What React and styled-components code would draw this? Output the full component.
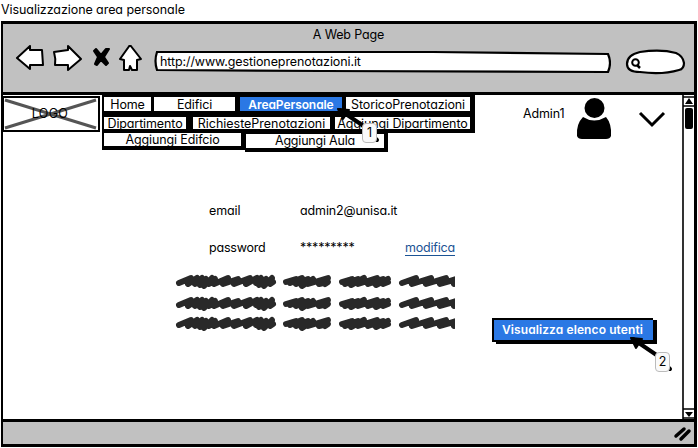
import React from "react";
import styled, { createGlobalStyle } from "styled-components";

const Global = createGlobalStyle`
  * { box-sizing: border-box; }
  html, body { margin: 0; background: #fff; overflow: hidden; }
  body {
    font-family: Inter, "Liberation Sans", sans-serif;
    font-feature-settings: "cv11", "ss03";
    font-size: 12.5px;
    line-height: 16px;
    color: #000;
  }
  svg { display: block; flex: none; }
`;

const Text = styled.span`
  position: relative;
  white-space: nowrap;
  font-size: ${(p) => p.$size || 12.5}px;
  letter-spacing: ${(p) => p.$ls ?? -0.12}px;
  font-weight: ${(p) => p.$weight || 400};
`;

const Page = styled.div`
  width: 698px;
  height: 448px;
  display: flex;
  flex-direction: column;
`;
const Caption = styled.header`
  height: 21px;
  padding: 2px 0 0 1px;
`;
const Browser = styled.main`
  width: 696px;
  height: 426px;
  margin-left: 1px;
  border: 3px solid #000;
  border-left-width: 2px;
  display: flex;
  flex-direction: column;
`;
const Chrome = styled.div`
  height: 71px;
  background: #c1c1c1;
  border-bottom: 3px solid #000;
  flex: none;
`;
const WindowTitle = styled.div`
  height: 21px;
  padding-top: 3px;
  text-align: center;
`;
const Toolbar = styled.div`
  display: flex;
  height: 45px;
`;
const NavIcons = styled.div`
  width: 150px;
  flex: none;
`;
const Address = styled.div`
  position: relative;
  width: 458px;
  height: 24px;
  margin-top: 5px;
  flex: none;
  svg { position: absolute; inset: 0; }
`;
const Url = styled.div`
  position: relative;
  padding: 4px 0 0 7px;
`;
const Search = styled.div`
  margin: 3px 0 0 13px;
`;
const Body = styled.div`
  height: 324px;
  display: flex;
  flex: none;
`;
const Content = styled.section`
  width: 679px;
  display: flex;
  flex-direction: column;
`;
const Top = styled.div`
  display: flex;
  height: 88px;
  align-items: flex-start;
`;
const Logo = styled.div`
  position: relative;
  width: 98px;
  height: 38px;
  flex: none;
  display: flex;
  justify-content: center;
  padding: 11px 4px 0 0;
  svg { position: absolute; left: 0; top: 0; }
`;
const Menu = styled.nav`
  width: 373px;
  margin-left: 1px;
  flex: none;
`;
const MenuRow = styled.div`
  display: flex;
  align-items: flex-start;
  height: ${(p) => p.$h}px;
`;
const MenuItem = styled.div`
  width: ${(p) => p.$w}px;
  height: ${(p) => p.$h}px;
  flex: none;
  border: solid #000;
  border-width: ${(p) => p.$b};
  background: ${(p) => (p.$active ? "#2b78e4" : "#fff")};
  color: ${(p) => (p.$active ? "#fff" : "#000")};
  display: flex;
  justify-content: center;
  line-height: ${(p) => p.$lh || 15}px;
`;
const User = styled.div`
  display: flex;
  margin-left: 48px;
  padding-top: 3px;
`;
const UserName = styled.div`
  width: 53px;
  padding-top: 8px;
`;
const Chevron = styled.div`
  margin: 13px 0 0 26px;
`;
const Details = styled.dl`
  margin: 20px 0 0 206px;
  height: 69px;
  display: grid;
  grid-template-columns: 91px 105px 60px;
  grid-auto-rows: 37px;
`;
const Link = styled.a`
  color: #1b5394;
  border-bottom: 1px solid #1b5394;
  width: 50px;
  height: 16px;
  white-space: nowrap;
`;
const Lower = styled.div`
  display: flex;
`;
const ScribbleArea = styled.div`
  width: 314px;
  padding: 0 0 0 172px;
  flex: none;
`;
const Action = styled.button`
  font: inherit;
  width: 165px;
  height: 26px;
  margin: 46px 0 0 175px;
  padding: 0 2px 2px 0;
  color: #fff;
  background: #2b78e4;
  border: solid #000;
  border-width: 2px 4px 4px 2px;
  line-height: 17px;
  clip-path: polygon(0 0, 161px 0, 161px 2px, 100% 2px, 100% 100%, 4px 100%, 4px 24px, 0 24px);
`;
const ScrollBar = styled.div`
  width: 12px;
  display: flex;
  flex-direction: column;
`;
const Footer = styled.footer`
  height: 25px;
  background: #c1c1c1;
  border-top: 3px solid #000;
  display: flex;
  justify-content: flex-end;
`;
const Callout = styled.div`
  position: absolute;
  left: ${(p) => p.$x}px;
  top: ${(p) => p.$y}px;
  width: 46px;
  height: 38px;
`;
const CalloutNumber = styled.div`
  position: absolute;
  left: 26px;
  top: 16px;
  width: 15px;
  height: 20px;
  border: 1px solid #bbb;
  border-radius: 4px;
  background: #fafafa;
  text-align: center;
  line-height: 18px;
`;

function Marker({ x, y, n }) {
  return (
    <Callout $x={x} $y={y}>
      <svg width="46" height="38">
        <path d="M4 3 29 20M40 32 41 33" fill="none" stroke="#000" strokeWidth="4" strokeLinecap="round" />
        <path d="M2 2 13 3 11 6 7 12Z" stroke="#000" strokeWidth="2" strokeLinejoin="round" />
      </svg>
      <CalloutNumber>{n}</CalloutNumber>
    </Callout>
  );
}

const scribbles = [
  "M4 11 16 6 13 12 22 6 20 12 27 6 25 13 31 7 29 14 37 6 34 12 40 7 39 12 53 6 48 12 63 7 59 12 75 6 71 12 82 6 81 11 86 6 84 13 91 7 89 14 97 6 95 12 98 10",
  "M111 10 121 7 115 11 127 6 121 12 133 7 127 14 138 7 133 12 153 6 144 12 153 10 150 12",
  "M167 10 177 7 170 12 183 7 176 13 189 6 183 12 202 6 193 12 208 7 201 13 213 7 208 12 213 10",
  "M227 11 241 6 237 12 256 6 251 12 271 6 265 12 285 6 279 12 288 7",
];

function Scribble({ height }) {
  return (
    <svg width="280" height={height}>
      {scribbles.map((d, i) => (
        <path key={i} d={d} fill="none" stroke="#292929" strokeWidth="6" strokeLinecap="round" strokeLinejoin="round" />
      ))}
    </svg>
  );
}

export default function App() {
  return (
    <Page>
      <Global />
      <Caption><Text $ls={-0.07}>Visualizzazione area personale</Text></Caption>
      <Browser>
        <Chrome>
          <WindowTitle><Text $ls={-0.15}>A Web Page</Text></WindowTitle>
          <Toolbar>
            <NavIcons>
              <svg width="150" height="45" fill="#fff" stroke="#000" strokeWidth="2" strokeLinejoin="round">
                <path d="M14 13 27 1 27 5 39 5 40 20 27 20 27 24Z" />
                <path d="M51 7 65 5 65 1 78 14 65 25 65 20 52 20Q53 14 51 7Z" />
                <path d="M127 0 117 14 121 15 121 25 126 25 127 21 129 25 134 25 134 15 138 14Z" />
                <path d="M93 4 98 10 103 4 106 4 101 12 105 18 103 20 98 15 94 20 92 19 95 12 91 6Z" fill="#000" strokeWidth="2" />
              </svg>
            </NavIcons>
            <Address>
              <svg width="458" height="24">
                <path d="M4 2 170 2 280 2 455 4Q459 13 455 22L170 21 4 20Q1 11 4 2Z" fill="#fff" stroke="#000" strokeWidth="2.2" />
              </svg>
              <Url><Text $ls={-0.1}>http://www.gestioneprenotazioni.it</Text></Url>
            </Address>
            <Search>
              <svg width="64" height="27">
                <path d="M3 16Q3 7 16 4 37 1 52 5 59 8 60 15 60 21 55 22 38 27 16 24 3 24 3 16Z" fill="#fff" stroke="#000" strokeWidth="2.2" />
                <circle cx="11.5" cy="14.5" r="3.3" fill="none" stroke="#000" strokeWidth="2" />
                <path d="M13 17 16 20" stroke="#000" strokeWidth="2.5" />
              </svg>
            </Search>
          </Toolbar>
        </Chrome>
        <Body>
          <Content>
            <Top>
              <Logo>
                <svg width="98" height="38">
                  <path d="M0 2H96V36H0Z" fill="#fff" stroke="#000" strokeWidth="2" />
                  <path d="M2 5 93 33M2 33 93 5" stroke="#555" strokeWidth="3" />
                </svg>
                <Text $ls={0.3}>LOGO</Text>
              </Logo>
              <Menu>
                <MenuRow $h={20}>
                  <MenuItem $w={51} $h={20} $b="2px 2px 4px 2px"><Text>Home</Text></MenuItem>
                  <MenuItem $w={87} $h={20} $b="2px 5px 4px 1px"><Text>Edifici</Text></MenuItem>
                  <MenuItem $w={106} $h={20} $b="2px 4px 4px 0" $active><Text $weight={600} $size={12} $ls={-0.08}>AreaPersonale</Text></MenuItem>
                  <MenuItem $w={129} $h={20} $b="2px 5px 4px 0"><Text>StoricoPrenotazioni</Text></MenuItem>
                </MenuRow>
                <MenuRow $h={18}>
                  <MenuItem $w={88} $h={18} $b="2px 4px 4px 2px" $lh={13}><Text>Dipartimento</Text></MenuItem>
                  <MenuItem $w={144} $h={18} $b="2px 4px 4px 3px" $lh={14}><Text $ls={-0.02}>RichiestePrenotazioni</Text></MenuItem>
                  <MenuItem $w={141} $h={18} $b="2px 5px 4px 1px" $lh={14}><Text $ls={-0.1}>Aggiungi Dipartimento</Text></MenuItem>
                </MenuRow>
                <MenuRow $h={20}>
                  <MenuItem $w={143} $h={17} $b="0 4px 4px 2px" $lh={14}><Text>Aggiungi Edifcio</Text></MenuItem>
                  <MenuItem $w={143} $h={19} $b="1px 4px 4px 1px" $lh={14}><Text $ls={-0.2}>Aggiungi Aula</Text></MenuItem>
                </MenuRow>
              </Menu>
              <User>
                <UserName><Text>Admin1</Text></UserName>
                <svg width="36" height="42">
                  <circle cx="18.5" cy="10" r="10" />
                  <path d="M7 19Q18 26 30 19 36 26 35 38 34 41 30 41H6Q2 41 1 38 0 26 7 19Z" />
                </svg>
                <Chevron>
                  <svg width="28" height="17"><path d="M2 2 14 14 26 2" fill="none" stroke="#000" strokeWidth="3" /></svg>
                </Chevron>
              </User>
            </Top>
            <Details>
              <Text>email</Text><Text>admin2@unisa.it</Text><span />
              <Text $ls={-0.2}>password</Text><Text $ls={-0.2}>*********</Text><Link><Text $ls={-0.2}>modifica</Text></Link>
            </Details>
            <Lower>
              <ScribbleArea>
                <Scribble height={22} />
                <Scribble height={20} />
                <Scribble height={19} />
              </ScribbleArea>
              <Action><Text $weight={600} $size={12} $ls={0.1}>Visualizza elenco utenti</Text></Action>
            </Lower>
          </Content>
          <ScrollBar>
            <svg width="12" height="324">
              <path d="M1 0V326M1 2H12M1 11H12M1 314H12M1 323H12" fill="none" stroke="#000" strokeWidth="1.6" />
              <path d="M3 9 7 3 11 9ZM3 317H11L7 322Z" />
              <rect x="3" y="13" width="8" height="21" rx="2" />
            </svg>
          </ScrollBar>
        </Body>
        <Footer>
          <svg width="24" height="22"><path d="M6 14 14 7M11 17 19 9" stroke="#000" strokeWidth="3.5" strokeLinecap="round" /></svg>
        </Footer>
      </Browser>
      <Marker x={336} y={107} n="1" />
      <Marker x={629} y={336} n="2" />
    </Page>
  );
}
